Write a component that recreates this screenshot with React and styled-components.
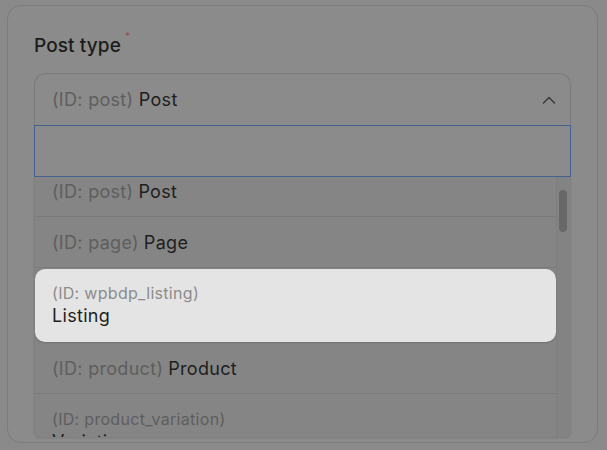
import React, {useLayoutEffect, useRef} from 'react';
import styled, {createGlobalStyle} from 'styled-components';

const GlobalStyle = createGlobalStyle`
  html, body {
    margin: 0;
    padding: 0;
    background: #8a8a8a;
    font-family: Inter, "Noto Sans", sans-serif;
  }
`;

const Page = styled.div`
  width: 607px;
  height: 450px;
  box-sizing: border-box;
  padding: 5px 9px 7px 7px;
  overflow: hidden;
`;

const Card = styled.div`
  height: 100%;
  box-sizing: border-box;
  border: 1px solid #7c7c7c;
  border-radius: 14px;
  background: #8b8b8b;
  padding: 29px 26px 5px 26px;
  display: flex;
  flex-direction: column;
  overflow: hidden;
`;

const Label = styled.div`
  font-size: 19px;
  font-weight: 500;
  letter-spacing: 0.1px;
  color: #1c1c1c;
  line-height: 22px;
  margin-bottom: 16px;
  display: flex;
  align-items: flex-start;

  span {
    color: #a0504d;
    font-size: 10px;
    line-height: 10px;
    margin-left: 4px;
    margin-top: -4px;
  }
`;

const Select = styled.div`
  display: flex;
  flex-direction: column;
  flex: 1;
  min-height: 0;
`;

const Control = styled.div`
  height: 52px;
  box-sizing: border-box;
  border: 1px solid #7b7b7b;
  border-bottom: none;
  border-radius: 12px 12px 0 0;
  display: flex;
  align-items: center;
  justify-content: space-between;
  padding: 1px 14px 0 17px;
`;

const Muted = styled.span`
  color: ${({$light}) => ($light ? '#8c8c8c' : '#5e5e5e')};
`;

const Strong = styled.span`
  color: #1e1e1e;
`;

const Value = styled.div`
  font-size: 18px;
  letter-spacing: 0.3px;
  line-height: 22px;
`;

const Search = styled.input`
  height: 52px;
  box-sizing: border-box;
  width: 100%;
  margin: 0;
  border: 1px solid #45618f;
  background: #8b8b8b;
  outline: none;
  font: inherit;
`;

const Menu = styled.div`
  flex: 1;
  min-height: 0;
  display: flex;
  background: #858585;
  border-radius: 0 0 6px 6px;
  box-shadow: 0 1px 2px rgba(0, 0, 0, 0.12);
  border-left: 1px solid #7f7f7f;
`;

const Options = styled.div`
  flex: 1;
  overflow: hidden;
`;

const Option = styled.div`
  box-sizing: border-box;
  min-height: 51px;
  padding: 15px 17px 13px;
  border-bottom: 1px solid #7a7a7a;
  font-size: 18px;
  letter-spacing: 0.3px;
  line-height: 22px;
  display: flex;
  flex-direction: ${({$twoLine}) => ($twoLine ? 'column' : 'row')};
  gap: ${({$twoLine}) => ($twoLine ? '2px' : '5px')};

  &.active {
    background: #e4e4e4;
    border-radius: 10px;
    border-bottom-color: transparent;
    box-shadow: 0 1px 2px rgba(0, 0, 0, 0.15);
    margin: 1px 0 1px;
    min-height: 73px;
    padding-top: 14px;
  }
`;

const IdLine = styled.div`
  font-size: 16px;
  line-height: 20px;
`;

const Track = styled.div`
  width: 14px;
  background: #838383;
  border-left: 1px solid #7e7e7e;
  border-radius: 0 0 6px 0;
`;

const Thumb = styled.div`
  width: 8px;
  height: 42px;
  margin: 13px 0 0 2px;
  border-radius: 4px;
  background: #686868;
`;

const options = [
    {id: 'post', name: 'Post'},
    {id: 'page', name: 'Page'},
    {id: 'wpbdp_listing', name: 'Listing', twoLine: true, active: true},
    {id: 'product', name: 'Product'},
    {id: 'product_variation', name: 'Variation', twoLine: true},
    {id: 'shop_order', name: 'Order'},
];

const ChevronUp = () => (
    <svg width="14" height="8" viewBox="0 0 14 8" fill="none">
        <path d="M1.5 7L7 1.5L12.5 7" stroke="#3a3a3a" strokeWidth="1.5" strokeLinecap="round"
              strokeLinejoin="round"/>
    </svg>
);

export default function App() {
    const listRef = useRef(null);

    useLayoutEffect(() => {
        if (listRef.current) listRef.current.scrollTop = 11;
    }, []);

    return (
        <Page>
            <GlobalStyle/>
            <Card>
                <Label>Post type<span>*</span></Label>
                <Select>
                    <Control>
                        <Value><Muted>(ID: post)</Muted> <Strong>Post</Strong></Value>
                        <ChevronUp/>
                    </Control>
                    <Search type="text"/>
                    <Menu>
                        <Options ref={listRef}>
                            {options.map(o => (
                                <Option key={o.id} $twoLine={o.twoLine} className={o.active ? 'active' : ''}>
                                    {o.twoLine ? (
                                        <>
                                            <IdLine><Muted $light={o.active}>(ID: {o.id})</Muted></IdLine>
                                            <Strong>{o.name}</Strong>
                                        </>
                                    ) : (
                                        <>
                                            <Muted>(ID: {o.id})</Muted>
                                            <Strong>{o.name}</Strong>
                                        </>
                                    )}
                                </Option>
                            ))}
                        </Options>
                        <Track><Thumb/></Track>
                    </Menu>
                </Select>
            </Card>
        </Page>
    );
}
